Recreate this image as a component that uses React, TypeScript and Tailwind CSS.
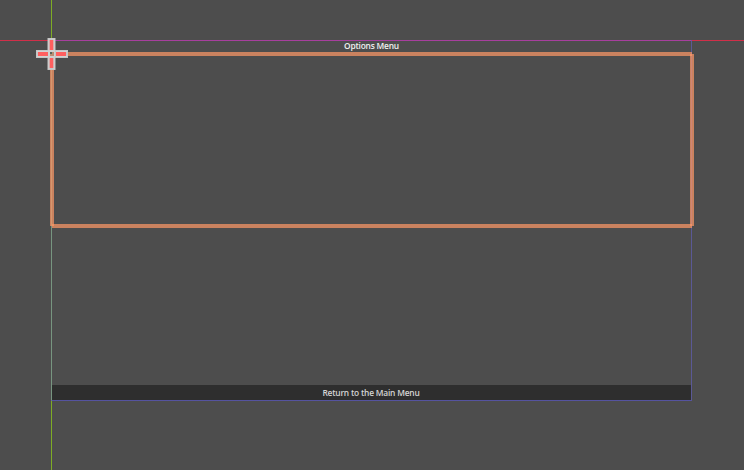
function Gizmo() {
  return (
    <svg className="absolute left-[-17px] top-[-4px]" width="34" height="34" viewBox="35 37 34 34" aria-hidden="true">
      <path d="M47.5 38h8v12H68v8H55.5v12h-8V58H36v-8h11.5z" fill="#c6c6c6" />
      <path d="M48.5 39h1v11h-1zM53.5 39h1v11h-1zM48.5 58h1v11h-1zM53.5 58h1v11h-1zM37 51h11v1H37zM56 51h11v1H56zM37 56h11v1H37zM56 56h11v1H56z" fill="#d2d2d2" />
      <path d="M49.7 40h3.6v10h-3.6zM49.7 58h3.6v10h-3.6zM38 52h10v4H38zM56 52h10v4H56z" fill="#ff5f5f" />
      <path d="M48 50h7v8h-7z" fill="#d0d0d0" />
      <path d="M50 52h4v4h-4z" fill="#b98d72" />
      <path d="M50 52h2v2h-2z" fill="#59635a" />
    </svg>
  );
}

function SelectionFrame() {
  return (
    <div className="-mx-[2px] grid h-[176px] w-[644px] grid-cols-[2px_2px_636px_2px_2px] grid-rows-[2px_2px_168px_2px_2px]">
      <div className="col-start-2 col-end-5 row-start-1 row-end-3 bg-[#ff9966]/70" />
      <div className="col-start-1 col-end-3 row-start-2 row-end-5 bg-[#ff9966]/70" />
      <div className="col-start-4 col-end-6 row-start-2 row-end-5 bg-[#ff9966]/70" />
      <div className="col-start-2 col-end-5 row-start-4 row-end-6 bg-[#ff9966]/70" />
    </div>
  );
}

export default function App() {
  return (
    <main className="grid h-[470px] w-[744px] grid-cols-[51px_641px_52px] grid-rows-[40px_361px_69px] overflow-hidden bg-[#4d4d4d] font-['Open_Sans','Noto_Sans',sans-serif] text-[8.4px] font-semibold tracking-[-0.2px]">
      <div />
      <div className="border-l border-[#7eac25]" />
      <div />
      <div className="border-t border-[#d12f49]" />
      <section className="relative flex flex-col border border-t-[#a73f9e] border-r-[#5b5996] border-b-[#5553a0] border-l-[#779580]">
        <h1 className="h-[11px] text-center leading-[10px] text-[#f0f0f0]">Options Menu</h1>
        <SelectionFrame />
        <div className="flex-1" />
        <button className="h-[15px] w-full bg-[#2e2e2e] pr-px text-center leading-[15px] text-[#d4d4d4]">Return to the Main Menu</button>
        <Gizmo />
      </section>
      <div className="border-t border-[#d12f49]" />
      <div />
      <div className="border-l border-[#7eac25]" />
      <div />
    </main>
  );
}
